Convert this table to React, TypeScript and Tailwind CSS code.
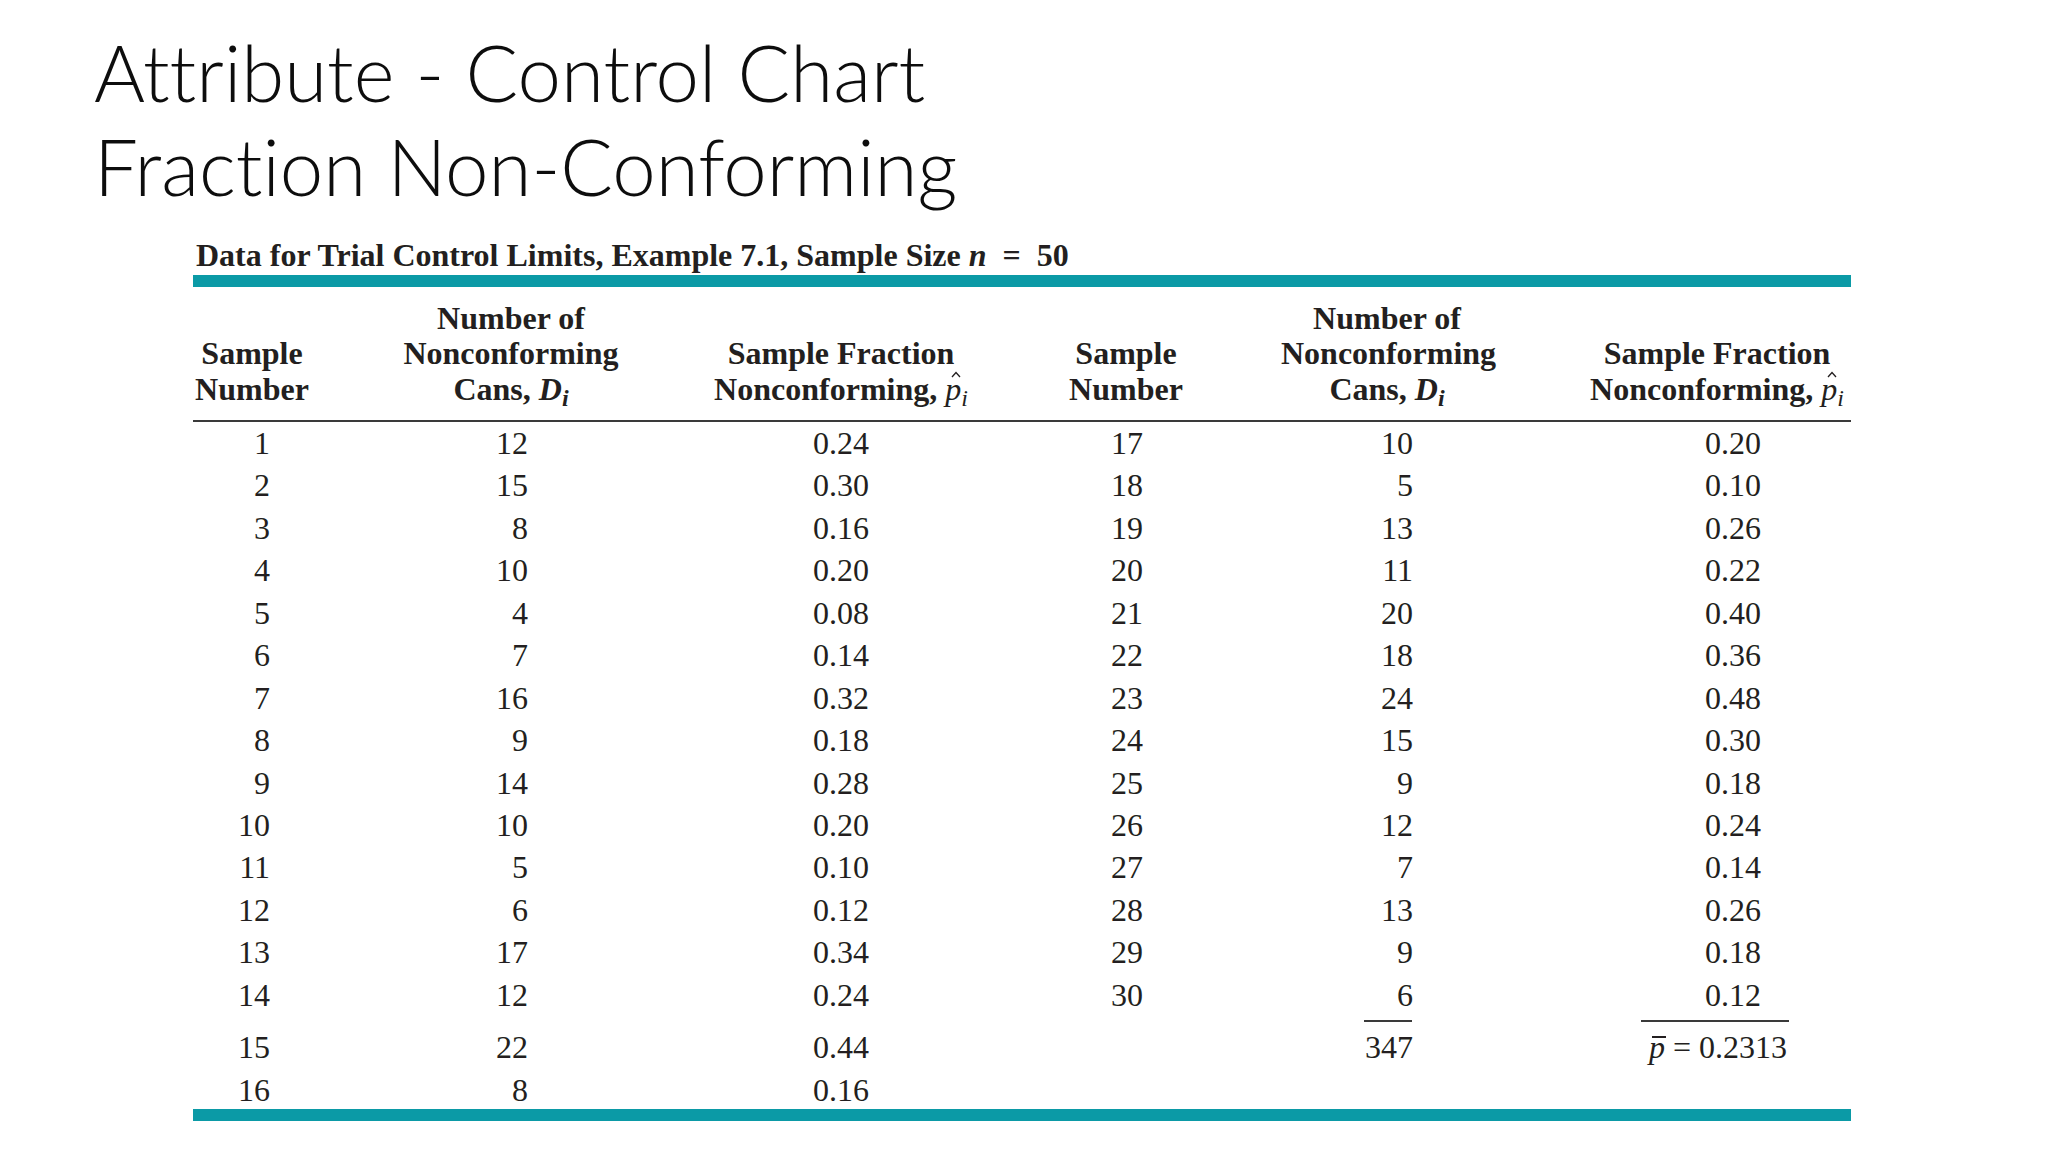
import { ReactElement, ReactNode } from "react";

type Row = [string, string, string, string, string, string];

const rows: Row[] = [
    ["1", "12", "0.24", "17", "10", "0.20"],
    ["2", "15", "0.30", "18", "5", "0.10"],
    ["3", "8", "0.16", "19", "13", "0.26"],
    ["4", "10", "0.20", "20", "11", "0.22"],
    ["5", "4", "0.08", "21", "20", "0.40"],
    ["6", "7", "0.14", "22", "18", "0.36"],
    ["7", "16", "0.32", "23", "24", "0.48"],
    ["8", "9", "0.18", "24", "15", "0.30"],
    ["9", "14", "0.28", "25", "9", "0.18"],
    ["10", "10", "0.20", "26", "12", "0.24"],
    ["11", "5", "0.10", "27", "7", "0.14"],
    ["12", "6", "0.12", "28", "13", "0.26"],
    ["13", "17", "0.34", "29", "9", "0.18"],
    ["14", "12", "0.24", "30", "6", "0.12"],
];

const grid = "grid grid-cols-[118px_400px_260px_310px_212px_358px]";

// italic p with a circumflex drawn above it
function PHat(): ReactElement {
    return (
        <span className="relative inline-block italic font-normal">
            p
            <svg className="absolute left-[6px] top-[-1px]" width="10" height="7" viewBox="0 0 10 7">
                <path d="M1 6 L5 1.5 L9 6" fill="none" stroke="#231f20" strokeWidth="1.3" />
            </svg>
        </span>
    );
}

function PBar(): ReactElement {
    return (
        <span className="relative inline-block italic">
            p
            <span className="absolute left-[3px] right-[-1px] top-[10px] h-[2px] bg-[#231f20]" />
        </span>
    );
}

function DataRow({ cells }: { cells: ReactNode[] }): ReactElement {
    return (
        <div className={`${grid} h-[42.45px] leading-[42.45px] text-[32px]`}>
            <div className="text-right pr-[41px]">{cells[0]}</div>
            <div className="text-right pr-[183px]">{cells[1]}</div>
            <div className="text-center">{cells[2]}</div>
            <div className="text-right pr-[138px]">{cells[3]}</div>
            <div className="text-right pr-[80px]">{cells[4]}</div>
            <div className="text-right pr-[90px]">{cells[5]}</div>
        </div>
    );
}

export default function App(): ReactElement {
    return (
        <div className="w-[2048px] h-[1152px] bg-white overflow-hidden text-[#231f20]">
            <h1 className="pl-[94px] pt-[25px] font-['Lato',sans-serif] text-[78px] leading-[94px] font-light text-[#0d0d0d] [font-variant-ligatures:none]">
                Attribute - Control Chart
                <br />
                Fraction Non-Conforming
            </h1>

            <div className="ml-[193px] mt-[24px] w-[1658px] font-['Liberation_Serif',serif]">
                {/* Caption */}
                <p className="pl-[3px] text-[32px] leading-[36px] font-bold">
                    Data for Trial Control Limits, Example 7.1, Sample Size <i>n</i> &nbsp;=&nbsp; 50
                </p>
                <div className="mt-[2px] h-[12px] bg-[#0b9aa6]" />

                {/* Column headers */}
                <div className={`${grid} mt-[13.5px] text-[32px] leading-[35.5px] font-bold items-end`}>
                    <div className="text-center">Sample<br />Number</div>
                    <div className="text-center">
                        Number of<br />Nonconforming<br />Cans, <i>D<sub>i</sub></i>
                    </div>
                    <div className="text-center">
                        Sample Fraction<br />Nonconforming, <PHat /><sub className="italic font-normal">i</sub>
                    </div>
                    <div className="text-center">Sample<br />Number</div>
                    <div className="text-center">
                        Number of<br />Nonconforming<br />Cans, <i>D<sub>i</sub></i>
                    </div>
                    <div className="text-center pl-[90px]">
                        Sample Fraction<br />Nonconforming, <PHat /><sub className="italic font-normal">i</sub>
                    </div>
                </div>
                <div className="mt-[13px] h-[2px] bg-[#3a3a3a]" />

                {/* Data */}
                {rows.map((r) => (
                    <DataRow key={r[0]} cells={r} />
                ))}

                {/* Totals rules */}
                <div className={`${grid} h-[10px] items-center`}>
                    <div />
                    <div />
                    <div />
                    <div />
                    <div className="flex justify-end pr-[81px]">
                        <div className="w-[48px] h-[2px] bg-[#3a3a3a]" />
                    </div>
                    <div className="flex justify-end pr-[62px]">
                        <div className="w-[148px] h-[2px] bg-[#3a3a3a]" />
                    </div>
                </div>

                <DataRow
                    cells={[
                        "15",
                        "22",
                        "0.44",
                        "",
                        "347",
                        <span className="inline-block mr-[-26px] whitespace-nowrap">
                            <PBar /> = 0.2313
                        </span>,
                    ]}
                />
                <DataRow cells={["16", "8", "0.16", "", "", ""]} />

                <div className="mt-[-2px] h-[12px] bg-[#0b9aa6]" />
            </div>
        </div>
    );
}
